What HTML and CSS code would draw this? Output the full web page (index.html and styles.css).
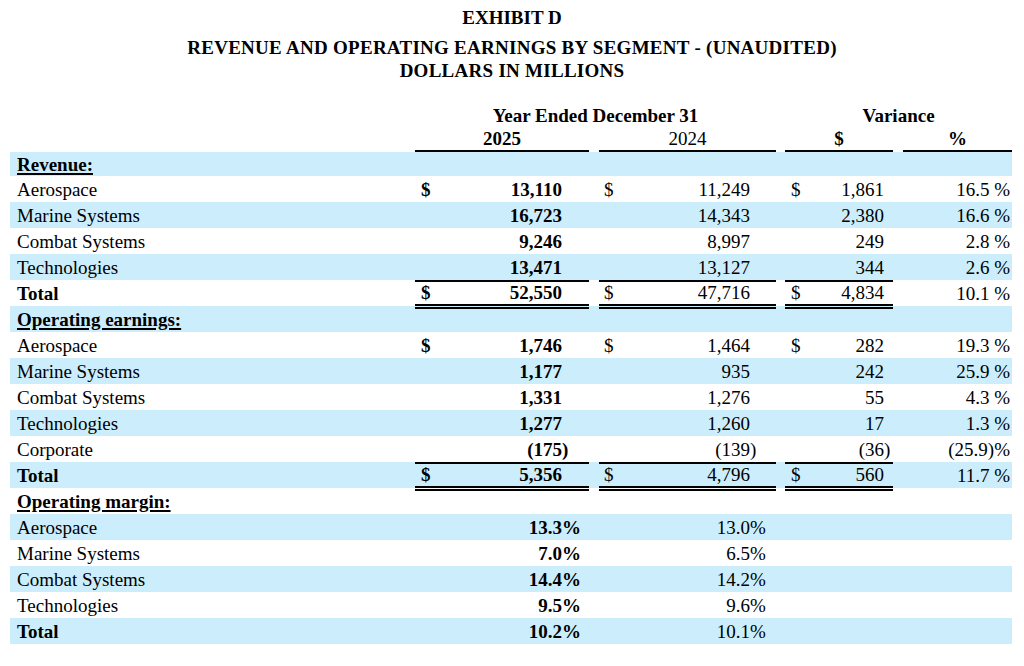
FILE: index.html
```html
<!DOCTYPE html>
<html lang="en">
<head>
<meta charset="utf-8">
<title>Exhibit D</title>
<link rel="stylesheet" href="styles.css">
</head>
<body>
<div class="doc">
  <h1 class="exhibit">EXHIBIT D</h1>
  <h2 class="title">REVENUE AND OPERATING EARNINGS BY SEGMENT - (UNAUDITED)<br>DOLLARS IN MILLIONS</h2>

  <div class="table">
    <div class="row head1">
      <div class="cell h span12">Year Ended December 31</div>
      <div class="cell h span34">Variance</div>
    </div>
    <div class="row head2">
      <div class="cell h c1">2025</div>
      <div class="cell h c2 reg">2024</div>
      <div class="cell h c3">$</div>
      <div class="cell h c4">%</div>
    </div>

    <div class="row b first"><div class="cell lbl"><span class="sec">Revenue:</span></div></div>
    <div class="row">
      <div class="cell lbl">Aerospace</div>
      <div class="cell c1"><span class="cur">$</span><span class="n">13,110</span><span class="sf"></span></div>
      <div class="cell c2"><span class="cur">$</span><span class="n">11,249</span><span class="sf"></span></div>
      <div class="cell c3"><span class="cur">$</span><span class="n">1,861</span><span class="sf"></span></div>
      <div class="cell c4">16.5 %</div>
    </div>
    <div class="row b">
      <div class="cell lbl">Marine Systems</div>
      <div class="cell c1"><span class="n">16,723</span><span class="sf"></span></div>
      <div class="cell c2"><span class="n">14,343</span><span class="sf"></span></div>
      <div class="cell c3"><span class="n">2,380</span><span class="sf"></span></div>
      <div class="cell c4">16.6 %</div>
    </div>
    <div class="row">
      <div class="cell lbl">Combat Systems</div>
      <div class="cell c1"><span class="n">9,246</span><span class="sf"></span></div>
      <div class="cell c2"><span class="n">8,997</span><span class="sf"></span></div>
      <div class="cell c3"><span class="n">249</span><span class="sf"></span></div>
      <div class="cell c4">2.8 %</div>
    </div>
    <div class="row b">
      <div class="cell lbl">Technologies</div>
      <div class="cell c1"><span class="n">13,471</span><span class="sf"></span></div>
      <div class="cell c2"><span class="n">13,127</span><span class="sf"></span></div>
      <div class="cell c3"><span class="n">344</span><span class="sf"></span></div>
      <div class="cell c4">2.6 %</div>
    </div>
    <div class="row tot">
      <div class="cell lbl strong">Total</div>
      <div class="cell c1"><span class="cur">$</span><span class="n">52,550</span><span class="sf"></span></div>
      <div class="cell c2"><span class="cur">$</span><span class="n">47,716</span><span class="sf"></span></div>
      <div class="cell c3"><span class="cur">$</span><span class="n">4,834</span><span class="sf"></span></div>
      <div class="cell c4">10.1 %</div>
    </div>

    <div class="row b"><div class="cell lbl"><span class="sec">Operating earnings:</span></div></div>
    <div class="row">
      <div class="cell lbl">Aerospace</div>
      <div class="cell c1"><span class="cur">$</span><span class="n">1,746</span><span class="sf"></span></div>
      <div class="cell c2"><span class="cur">$</span><span class="n">1,464</span><span class="sf"></span></div>
      <div class="cell c3"><span class="cur">$</span><span class="n">282</span><span class="sf"></span></div>
      <div class="cell c4">19.3 %</div>
    </div>
    <div class="row b">
      <div class="cell lbl">Marine Systems</div>
      <div class="cell c1"><span class="n">1,177</span><span class="sf"></span></div>
      <div class="cell c2"><span class="n">935</span><span class="sf"></span></div>
      <div class="cell c3"><span class="n">242</span><span class="sf"></span></div>
      <div class="cell c4">25.9 %</div>
    </div>
    <div class="row">
      <div class="cell lbl">Combat Systems</div>
      <div class="cell c1"><span class="n">1,331</span><span class="sf"></span></div>
      <div class="cell c2"><span class="n">1,276</span><span class="sf"></span></div>
      <div class="cell c3"><span class="n">55</span><span class="sf"></span></div>
      <div class="cell c4">4.3 %</div>
    </div>
    <div class="row b">
      <div class="cell lbl">Technologies</div>
      <div class="cell c1"><span class="n">1,277</span><span class="sf"></span></div>
      <div class="cell c2"><span class="n">1,260</span><span class="sf"></span></div>
      <div class="cell c3"><span class="n">17</span><span class="sf"></span></div>
      <div class="cell c4">1.3 %</div>
    </div>
    <div class="row">
      <div class="cell lbl">Corporate</div>
      <div class="cell c1"><span class="n">(175</span><span class="sf">)</span></div>
      <div class="cell c2"><span class="n">(139</span><span class="sf">)</span></div>
      <div class="cell c3"><span class="n">(36</span><span class="sf">)</span></div>
      <div class="cell c4">(25.9)%</div>
    </div>
    <div class="row b tot">
      <div class="cell lbl strong">Total</div>
      <div class="cell c1"><span class="cur">$</span><span class="n">5,356</span><span class="sf"></span></div>
      <div class="cell c2"><span class="cur">$</span><span class="n">4,796</span><span class="sf"></span></div>
      <div class="cell c3"><span class="cur">$</span><span class="n">560</span><span class="sf"></span></div>
      <div class="cell c4">11.7 %</div>
    </div>

    <div class="row"><div class="cell lbl"><span class="sec">Operating margin:</span></div></div>
    <div class="row b">
      <div class="cell lbl">Aerospace</div>
      <div class="cell c1"><span class="n">13.3</span><span class="sf">%</span></div>
      <div class="cell c2"><span class="n">13.0</span><span class="sf">%</span></div>
    </div>
    <div class="row">
      <div class="cell lbl">Marine Systems</div>
      <div class="cell c1"><span class="n">7.0</span><span class="sf">%</span></div>
      <div class="cell c2"><span class="n">6.5</span><span class="sf">%</span></div>
    </div>
    <div class="row b">
      <div class="cell lbl">Combat Systems</div>
      <div class="cell c1"><span class="n">14.4</span><span class="sf">%</span></div>
      <div class="cell c2"><span class="n">14.2</span><span class="sf">%</span></div>
    </div>
    <div class="row">
      <div class="cell lbl">Technologies</div>
      <div class="cell c1"><span class="n">9.5</span><span class="sf">%</span></div>
      <div class="cell c2"><span class="n">9.6</span><span class="sf">%</span></div>
    </div>
    <div class="row b">
      <div class="cell lbl strong">Total</div>
      <div class="cell c1"><span class="n">10.2</span><span class="sf">%</span></div>
      <div class="cell c2"><span class="n">10.1</span><span class="sf">%</span></div>
    </div>
  </div>
</div>
</body>
</html>
```
FILE: styles.css
```css
* {
  box-sizing: border-box;
}

body {
  margin: 0;
  background: #ffffff;
  color: #000000;
  font-family: "Liberation Serif", "Times New Roman", serif;
  font-size: 19px;
}

.doc {
  padding-top: 6px;
}

.exhibit,
.title {
  margin: 0;
  font-size: 19px;
  font-weight: bold;
  line-height: 23px;
  text-align: center;
}

.title {
  margin-top: 7px;
  letter-spacing: 0.27px;
}

.table {
  margin: 23px 0 0 10px;
  width: 1002px;
}

.row {
  display: grid;
  grid-template-columns: 405px 174px 10px 177px 9px 108px 10px 109px;
  grid-template-rows: 26px;
  height: 26px;
}

.row.b {
  background: #cceefc;
}

.row.head1 {
  grid-template-rows: 22px;
  height: 22px;
}

.row.head2 {
  grid-template-rows: 25px;
  height: 25px;
}

.row.first {
  grid-template-rows: 24px;
  height: 24px;
}

.cell {
  display: flex;
  align-items: center;
  justify-content: flex-end;
  height: 26px;
  padding-top: 2px;
  white-space: nowrap;
}

.lbl {
  grid-column: 1;
  justify-content: flex-start;
  padding-left: 7px;
}

.strong {
  font-weight: bold;
}

.sec {
  font-weight: bold;
  text-decoration: underline;
  text-decoration-thickness: 1.5px;
  text-underline-offset: 2px;
}

.c1 {
  grid-column: 2;
  padding-left: 6px;
  font-weight: bold;
}

.c2 {
  grid-column: 4;
  padding-left: 5px;
}

.c3 {
  grid-column: 6;
  padding-left: 6px;
}

.c4 {
  grid-column: 8;
  padding-right: 2px;
}

.c1 .sf {
  width: 27px;
}

.c2 .sf {
  width: 26px;
}

.c3 .sf {
  width: 9px;
}

.cur {
  margin-right: auto;
}

.sf {
  text-align: left;
}

.h {
  justify-content: center;
  font-weight: bold;
  padding: 0;
}

.h.reg {
  font-weight: normal;
}

.head1 .h {
  height: 22px;
}

.head2 .h {
  height: 25px;
  border-bottom: 2px solid #000000;
}

.first .cell {
  height: 24px;
  padding-top: 1px;
}

.span12 {
  grid-column: 2 / 5;
}

.span34 {
  grid-column: 6 / 9;
}

.tot .c1,
.tot .c2,
.tot .c3 {
  height: 29px;
  padding-top: 0;
  align-self: start;
  border-top: 2px solid #000000;
  border-bottom: 5px double #000000;
}
```
